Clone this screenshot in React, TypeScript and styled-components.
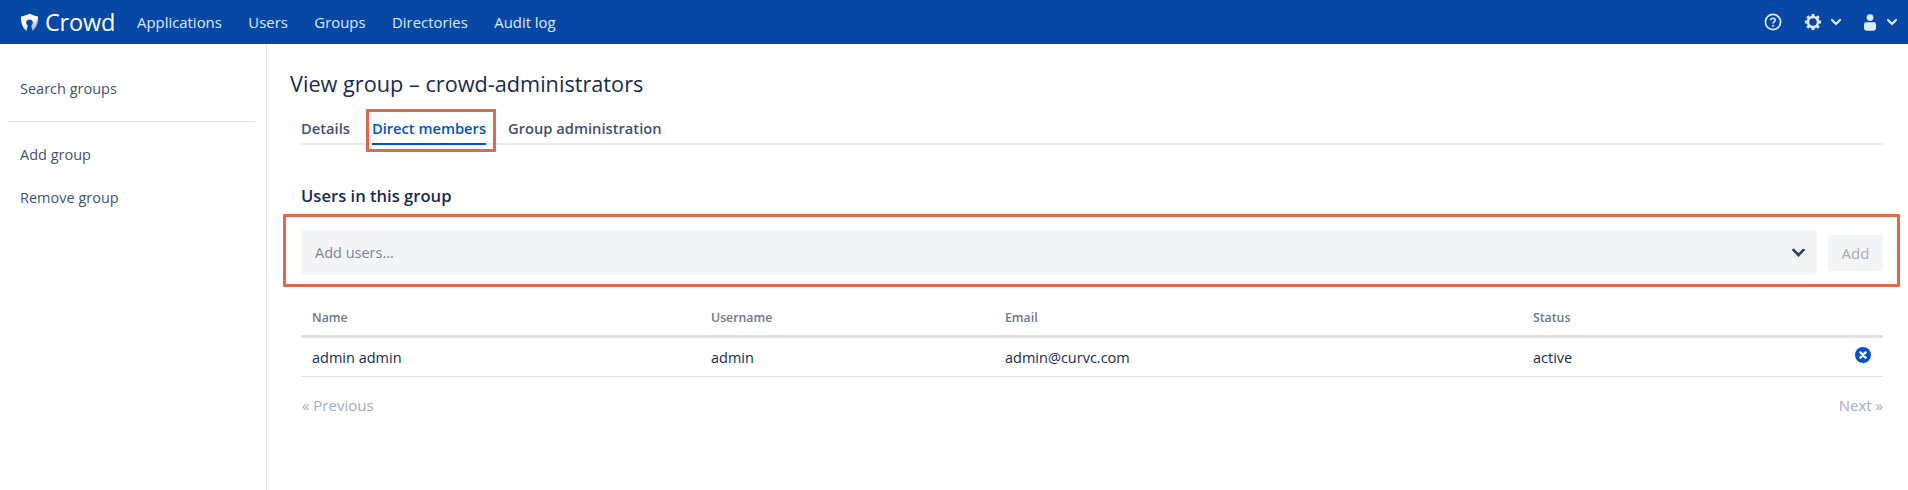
import styled, { createGlobalStyle } from 'styled-components';

const navItems = ['Applications', 'Users', 'Groups', 'Directories', 'Audit log'];
const sideTop = ['Search groups'];
const sideBottom = ['Add group', 'Remove group'];
const columns = ['Name', 'Username', 'Email', 'Status'];
const row = ['admin admin', 'admin', 'admin@curvc.com', 'active'];

const GlobalStyle = createGlobalStyle`
  html, body {
    margin: 0;
    padding: 0;
    background: #fff;
  }
  body {
    font-family: 'Open Sans', 'Noto Sans', sans-serif;
    font-size: 14px;
    color: #172b4d;
  }
`;

const Page = styled.div`
  width: 1908px;
  height: 490px;
  display: flex;
  flex-direction: column;
  overflow: hidden;
`;

const Header = styled.header`
  height: 44px;
  flex: none;
  background: #0747a6;
  color: #deebff;
  display: flex;
  align-items: center;
  padding: 0 10px 0 20px;
`;

const Logo = styled.div`
  display: flex;
  align-items: center;
  gap: 6px;
  width: 117px;
  color: #fff;
  font-size: 23.5px;
  letter-spacing: -0.2px;
`;

const Nav = styled.nav`
  display: flex;
  gap: 26.5px;
  font-size: 14.9px;
`;

const HeaderIcons = styled.div`
  margin-left: auto;
  display: flex;
  align-items: center;
`;

const IconButton = styled.div<{ $width: number; $gap?: number }>`
  width: ${(p) => p.$width}px;
  display: flex;
  align-items: center;
  gap: ${(p) => p.$gap ?? 0}px;
`;

const Body = styled.div`
  flex: 1;
  display: flex;
`;

const Sidebar = styled.aside`
  width: 267px;
  flex: none;
  box-sizing: border-box;
  border-right: 1px solid #dfe1e6;
  padding: 35px 11px 0 8px;
  color: #42526e;
  font-size: 14.5px;
`;

const SideItem = styled.div`
  height: 20px;
  line-height: 20px;
  padding-left: 12px;
  & + & {
    margin-top: 23px;
  }
`;

const SideRule = styled.hr`
  border: 0;
  border-top: 1px solid #dfe1e6;
  margin: 22px 0 23px;
`;

const Main = styled.main`
  flex: 1;
  padding: 26px 25px 0 23px;
`;

const Title = styled.h1`
  margin: 0;
  font-size: 21.7px;
  font-weight: 500;
  line-height: 28px;
  color: #172b4d;
`;

const Content = styled.div`
  margin-left: 11px;
`;

const Tabs = styled.div`
  display: flex;
  margin-top: 20px;
  height: 25px;
  border-bottom: 2px solid #ebecf0;
  font-size: 14.7px;
  font-weight: 600;
  color: #42526e;
`;

const Tab = styled.div<{ $active?: boolean }>`
  position: relative;
  box-sizing: border-box;
  height: 27px;
  line-height: 20px;
  margin-right: 22px;
  color: ${(p) => (p.$active ? '#0052cc' : '#42526e')};
  border-bottom: 2px solid ${(p) => (p.$active ? '#0052cc' : 'transparent')};
`;

const Annotation = styled.div<{ $inset: string }>`
  position: absolute;
  inset: ${(p) => p.$inset};
  border: 3px solid #e0694c;
  border-radius: 1px;
  pointer-events: none;
`;

const SectionTitle = styled.h2`
  margin: 41px 0 0;
  font-size: 16.6px;
  font-weight: 600;
  line-height: 20px;
  color: #172b4d;
`;

const AddRow = styled.div`
  position: relative;
  margin-top: 24px;
  display: flex;
  align-items: center;
  gap: 11px;
`;

const SelectBox = styled.div`
  flex: 1;
  height: 45px;
  box-sizing: border-box;
  padding: 0 11px 0 14px;
  background: #f4f5f7;
  border-radius: 3px;
  display: flex;
  align-items: center;
  justify-content: space-between;
  color: #7a869a;
  font-size: 14.5px;
`;

const AddButton = styled.div`
  width: 55px;
  height: 36px;
  background: #f4f5f7;
  border-radius: 3px;
  color: #a5adba;
  font-size: 15px;
  display: flex;
  align-items: center;
  justify-content: center;
`;

const Table = styled.div`
  margin-top: 24px;
`;

const Row = styled.div<{ $head?: boolean }>`
  display: grid;
  grid-template-columns: 399px 294px 528px 1fr 40px;
  align-items: center;
  height: ${(p) => (p.$head ? 36 : 38)}px;
  border-bottom: ${(p) => (p.$head ? '3px solid #dfe1e6' : '1px solid #dfe1e6')};
  color: ${(p) => (p.$head ? '#6b778c' : '#172b4d')};
  font-size: ${(p) => (p.$head ? 12.3 : 14.5)}px;
  font-weight: ${(p) => (p.$head ? 600 : 400)};
`;

const Cell = styled.div`
  padding-left: 11px;
`;

const RemoveCell = styled.div`
  display: flex;
  padding-left: 12px;
  margin-top: -4px;
`;

const Pager = styled.div`
  display: flex;
  justify-content: space-between;
  margin-top: 18px;
  padding-left: 1px;
  line-height: 20px;
  color: #a5adba;
  font-size: 15px;
`;

const LogoIcon = () => (
  <svg width="19" height="19" viewBox="0 0 19 19">
    <defs>
      <linearGradient id="shield" x1="0.1" y1="0.1" x2="0.75" y2="1">
        <stop offset="0.5" stopColor="#fff" />
        <stop offset="1" stopColor="#7fa6de" />
      </linearGradient>
    </defs>
    <path
      fill="url(#shield)"
      d="M9.5 0.8 C11.8 2 14.6 3 18 3.4 C18.4 9.4 16.4 14.8 12.4 18 L11.3 12.7 A3.4 3.4 0 1 0 7.7 12.7 L6.6 18 C2.6 14.8 0.6 9.4 1 3.4 C4.4 3 7.2 2 9.5 0.8 Z"
    />
  </svg>
);

const HelpIcon = () => (
  <svg width="18" height="18" viewBox="0 0 18 18" fill="none" stroke="#deebff">
    <circle cx="9" cy="9" r="7.6" strokeWidth="1.7" />
    <path d="M6.7 7.2 C6.7 4.6 11.3 4.6 11.3 7.1 C11.3 8.8 9 8.7 9 10.5" strokeWidth="1.6" />
    <circle cx="9" cy="12.8" r="1" fill="#deebff" stroke="none" />
  </svg>
);

const GearIcon = () => (
  <svg width="18" height="18" viewBox="0 0 20 20" fill="none" stroke="#deebff">
    <circle cx="10" cy="10" r="5.6" strokeWidth="2.8" />
    <g strokeWidth="3.4">
      <path d="M10 1V4M10 16V19M1 10H4M16 10H19" />
      <path d="M3.6 3.6L5.8 5.8M14.2 14.2L16.4 16.4M3.6 16.4L5.8 14.2M14.2 5.8L16.4 3.6" />
    </g>
  </svg>
);

const UserIcon = () => (
  <svg width="12" height="17" viewBox="0 0 12 17" fill="#deebff">
    <circle cx="6" cy="3.6" r="3.4" />
    <path d="M2 8.2 H10 A2 2 0 0 1 12 10.2 V14 C12 15.8 10.8 16.8 9.2 16.8 H2.8 C1.2 16.8 0 15.8 0 14 V10.2 A2 2 0 0 1 2 8.2 Z" />
  </svg>
);

const Chevron = ({ color, size }: { color: string; size: number }) => (
  <svg width={size} height={size} viewBox="0 0 12 12" fill="none" stroke={color} strokeWidth="2.2" strokeLinecap="round">
    <path d="M2 4 L6 8 L10 4" />
  </svg>
);

const RemoveIcon = () => (
  <svg width="16" height="16" viewBox="0 0 16 16">
    <circle cx="8" cy="8" r="8" fill="#0052cc" />
    <path d="M5.4 5.4 L10.6 10.6 M10.6 5.4 L5.4 10.6" stroke="#fff" strokeWidth="2.4" strokeLinecap="round" />
  </svg>
);

const App = () => (
  <Page>
    <GlobalStyle />
    <Header>
      <Logo>
        <LogoIcon />
        Crowd
      </Logo>
      <Nav>
        {navItems.map((item) => (
          <span key={item}>{item}</span>
        ))}
      </Nav>
      <HeaderIcons>
        <IconButton $width={40}>
          <HelpIcon />
        </IconButton>
        <IconButton $width={60} $gap={8}>
          <GearIcon />
          <Chevron color="#deebff" size={12} />
        </IconButton>
        <IconButton $width={34} $gap={10}>
          <UserIcon />
          <Chevron color="#deebff" size={12} />
        </IconButton>
      </HeaderIcons>
    </Header>
    <Body>
      <Sidebar>
        {sideTop.map((item) => (
          <SideItem key={item}>{item}</SideItem>
        ))}
        <SideRule />
        {sideBottom.map((item) => (
          <SideItem key={item}>{item}</SideItem>
        ))}
      </Sidebar>
      <Main>
        <Title>View group – crowd-administrators</Title>
        <Content>
          <Tabs>
            <Tab>Details</Tab>
            <Tab $active>
              Direct members
              <Annotation $inset="-9px -10px -9px -6px" />
            </Tab>
            <Tab>Group administration</Tab>
          </Tabs>
          <SectionTitle>Users in this group</SectionTitle>
          <AddRow>
            <SelectBox>
              Add users...
              <Chevron color="#344563" size={15} />
            </SelectBox>
            <AddButton>Add</AddButton>
            <Annotation $inset="-16px -17px -12px -18px" />
          </AddRow>
          <Table>
            <Row $head>
              {columns.map((col) => (
                <Cell key={col}>{col}</Cell>
              ))}
            </Row>
            <Row>
              {row.map((val) => (
                <Cell key={val}>{val}</Cell>
              ))}
              <RemoveCell>
                <RemoveIcon />
              </RemoveCell>
            </Row>
          </Table>
          <Pager>
            <span>« Previous</span>
            <span>Next »</span>
          </Pager>
        </Content>
      </Main>
    </Body>
  </Page>
);

export default App;
